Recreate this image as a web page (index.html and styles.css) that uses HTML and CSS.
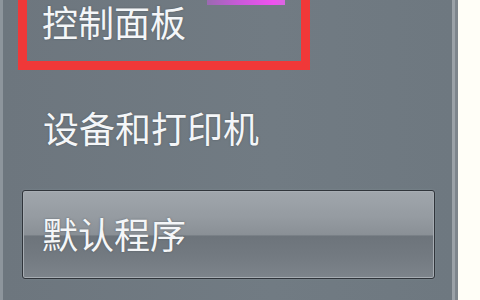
FILE: index.html
```html
<!DOCTYPE html>
<html lang="zh-CN">
<head>
  <meta charset="UTF-8">
  <title>开始菜单</title>
  <link rel="stylesheet" href="styles.css">
</head>
<body>
  <div id="menu">
    <div class="edgeLeft"></div>
    <div id="panel">
      <div class="arrowTail"></div>
      <div class="menuItem marked">控制面板</div>
      <div class="menuItem plain">设备和打印机</div>
      <div class="menuItem hover">默认程序</div>
    </div>
    <div class="edgeRight"></div>
    <div id="page"></div>
  </div>
</body>
</html>
```

FILE: styles.css
```css
body {
  margin: 0;
  padding: 0;
  width: 480px;
  height: 300px;
  overflow: hidden;
  font-family: "Noto Sans CJK SC", "Noto Sans", sans-serif;
}
#menu {
  display: flex;
  height: 300px;
  background: #6f7981;
}
.edgeLeft {
  width: 3px;
  background: #8d959c;
}
#panel {
  position: relative;
  width: 449px;
  display: flex;
  flex-direction: column;
  background: linear-gradient(90deg, #6d767e 0%, #717b83 60%, #6e7880 100%);
}
.arrowTail {
  position: absolute;
  left: 204px;
  top: 0;
  width: 78px;
  height: 5px;
  background: linear-gradient(90deg, #9a6ab0, #c85ad8 40%, #f052ef 85%, #d868e0);
  filter: blur(0.6px);
}
.menuItem {
  color: #f4f6f8;
  font-size: 36px;
  line-height: 40px;
  text-shadow: 0 0 2px rgba(60, 66, 72, 0.6);
}
.marked {
  margin-left: 15px;
  width: 259px;
  height: 58px;
  padding: 3px 0 0 15px;
  line-height: 36px;
  border: 9px solid #f03838;
  border-top: 0;
}
.plain {
  height: 83px;
  padding: 37px 0 0 40px;
}
.hover {
  margin-left: 19px;
  width: 392px;
  height: 65px;
  padding: 22px 0 0 19px;
  border: 1px solid #30353b;
  border-radius: 3px;
  box-shadow: inset 0 0 0 1px #a7adb3, 0 0 2px rgba(150, 158, 165, 0.6);
  background: linear-gradient(180deg, #a0a6ac 0%, #959ba1 30%, #8a9096 50%, #6d747b 52%, #737a81 75%, #7d848b 100%);
}
.edgeRight {
  width: 6px;
  background: linear-gradient(90deg, #9aa1a7 0, #9aa1a7 3px, #7d858c 3px);
}
#page {
  flex: 1;
  background: #fffef7;
}
```
